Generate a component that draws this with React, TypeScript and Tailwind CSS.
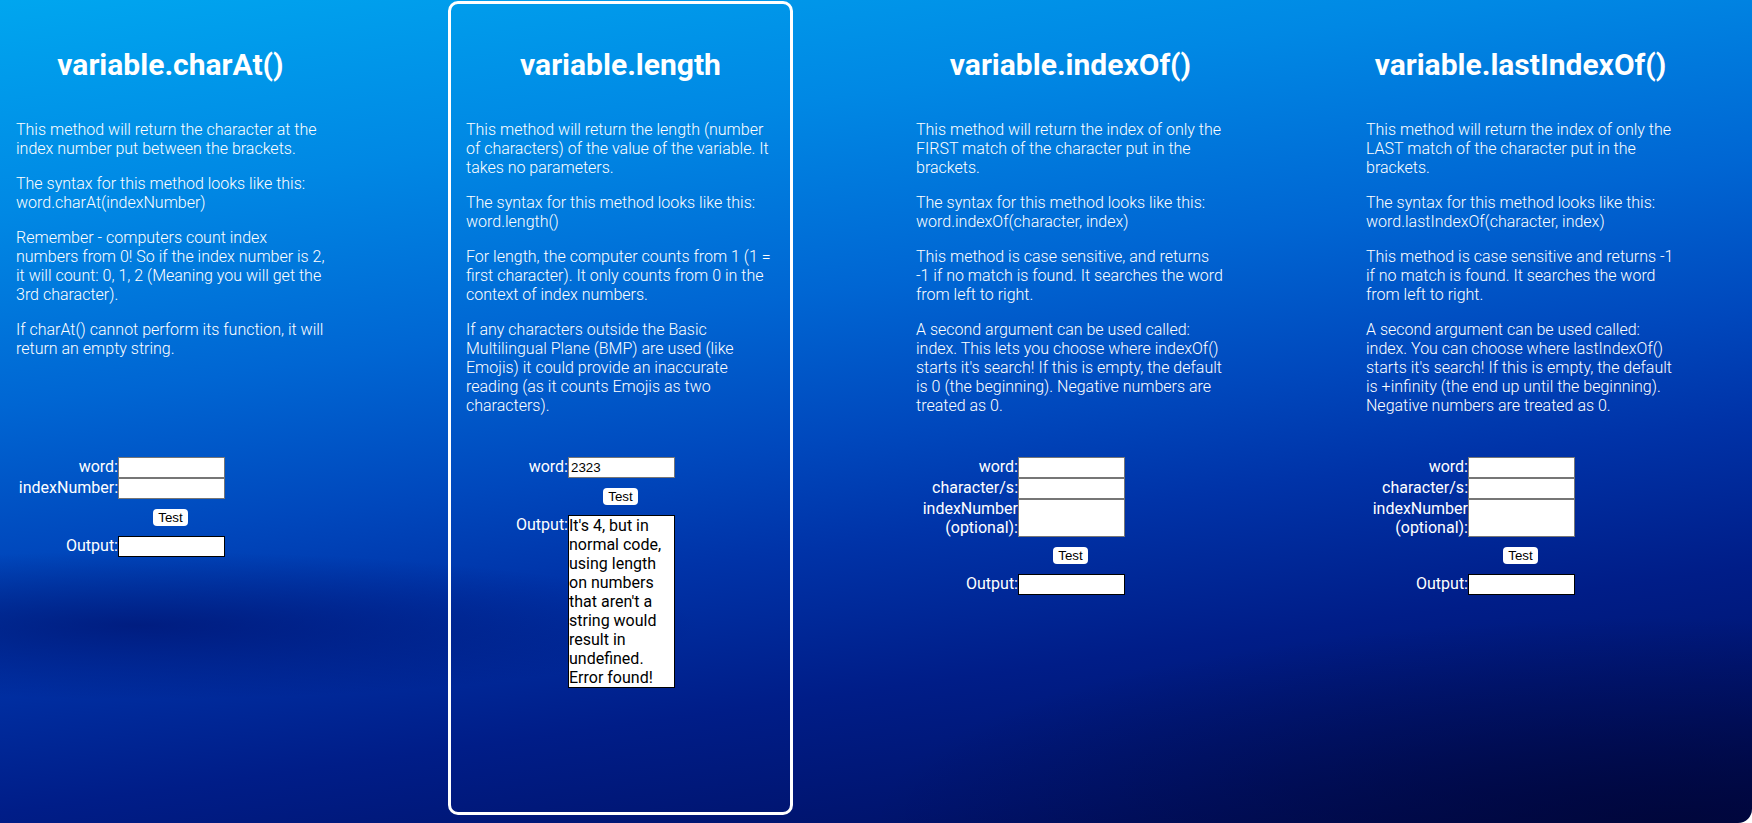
import React from "react";

type Field = { label: string; value?: string; tall?: boolean };
type Col = {
  title: string;
  paras: string[];
  fields: Field[];
  output: string;
  card?: boolean;
};

const cols: Col[] = [
  {
    title: "variable.charAt()",
    paras: [
      "This method will return the character at the index number put between the brackets.",
      "The syntax for this method looks like this: word.charAt(indexNumber)",
      "Remember - computers count index numbers from 0! So if the index number is 2, it will count: 0, 1, 2 (Meaning you will get the 3rd character).",
      "If charAt() cannot perform its function, it will return an empty string.",
    ],
    fields: [{ label: "word:" }, { label: "indexNumber:" }],
    output: "",
  },
  {
    title: "variable.length",
    paras: [
      "This method will return the length (number of characters) of the value of the variable. It takes no parameters.",
      "The syntax for this method looks like this: word.length()",
      "For length, the computer counts from 1 (1 = first character). It only counts from 0 in the context of index numbers.",
      "If any characters outside the Basic Multilingual Plane (BMP) are used (like Emojis) it could provide an inaccurate reading (as it counts Emojis as two characters).",
    ],
    fields: [{ label: "word:", value: "2323" }],
    output:
      "It's 4, but in normal code, using length on numbers that aren't a string would result in undefined. Error found!",
    card: true,
  },
  {
    title: "variable.indexOf()",
    paras: [
      "This method will return the index of only the FIRST match of the character put in the brackets.",
      "The syntax for this method looks like this: word.indexOf(character, index)",
      "This method is case sensitive, and returns -1 if no match is found. It searches the word from left to right.",
      "A second argument can be used called: index. This lets you choose where indexOf() starts it's search! If this is empty, the default is 0 (the beginning). Negative numbers are treated as 0.",
    ],
    fields: [
      { label: "word:" },
      { label: "character/s:" },
      { label: "indexNumber (optional):", tall: true },
    ],
    output: "",
  },
  {
    title: "variable.lastIndexOf()",
    paras: [
      "This method will return the index of only the LAST match of the character put in the brackets.",
      "The syntax for this method looks like this: word.lastIndexOf(character, index)",
      "This method is case sensitive and returns -1 if no match is found. It searches the word from left to right.",
      "A second argument can be used called: index. You can choose where lastIndexOf() starts it's search! If this is empty, the default is +infinity (the end up until the beginning). Negative numbers are treated as 0.",
    ],
    fields: [
      { label: "word:" },
      { label: "character/s:" },
      { label: "indexNumber (optional):", tall: true },
    ],
    output: "",
  },
];

function Column({ col }: { col: Col }) {
  return (
    <div
      className={
        "w-[345px] h-[814px] shrink-0 border-[3px] rounded-[10px] px-[15px] " +
        (col.card ? "border-white" : "border-transparent")
      }
    >
      <div className="mt-[42px] h-[38px] text-center text-[30px] leading-[38px] font-bold text-white">
        {col.title}
      </div>
      <div className="mt-[36px] h-[337px] text-[16px] leading-[19px] font-light text-white">
        {col.paras.map((p, i) => (
          <p key={i} className={i > 0 ? "mt-4" : ""}>
            {p}
          </p>
        ))}
      </div>
      <div className="grid grid-cols-[102px_107px]">
        {col.fields.map((f, i) => (
          <React.Fragment key={i}>
            <div className="text-right text-[16px] leading-[19px] text-white">{f.label}</div>
            <input
              readOnly
              value={f.value ?? ""}
              className={
                "w-[107px] bg-white border border-[#767676] px-[2px] text-[13.33px] text-black font-['Liberation_Sans',Arial,sans-serif] outline-none " +
                (f.tall ? "h-[38px]" : "h-[21px]")
              }
            />
          </React.Fragment>
        ))}
      </div>
      <div className="flex justify-center mt-[10px]">
        <button className="bg-white rounded-[4px] px-[5px] py-px text-[13.33px] leading-[15px] text-black font-['Liberation_Sans',Arial,sans-serif]">
          Test
        </button>
      </div>
      <div className="grid grid-cols-[102px_107px] mt-[10px]">
        <div className="text-right text-[16px] leading-[19px] text-white">Output:</div>
        <div className="w-[107px] min-h-[21px] bg-white border border-black text-[16px] leading-[19px] text-black">
          {col.output}
        </div>
      </div>
    </div>
  );
}

export default function App() {
  return (
    <div className="w-full h-[823px] bg-white overflow-hidden font-['Roboto','Noto_Sans',sans-serif]">
      <div className="relative w-full h-[823px] rounded-br-[14px] overflow-hidden bg-[radial-gradient(ellipse_32%_9%_at_8%_76%,rgba(0,12,100,0.6),transparent),radial-gradient(ellipse_45%_25%_at_95%_100%,rgba(0,4,50,0.7),transparent),linear-gradient(172deg,#00a6ef_0%,#0088e4_20%,#0066d3_38%,#0048bd_52%,#0033a8_62%,#001d88_76%,#00146f_88%,#000a50_100%)]">
        <div className="flex gap-[105px] ml-[-2px] pt-px">
          {cols.map((c, i) => (
            <Column key={i} col={c} />
          ))}
        </div>
      </div>
    </div>
  );
}
